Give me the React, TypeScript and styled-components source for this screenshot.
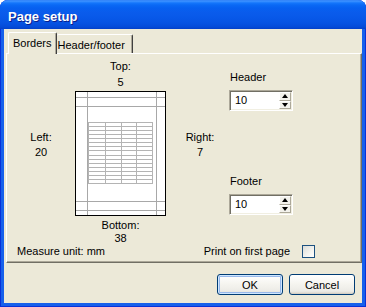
import React from "react";
import styled, { createGlobalStyle } from "styled-components";

const GlobalStyle = createGlobalStyle`
  html, body {
    margin: 0;
    padding: 0;
    background: #ffffff;
  }
  body {
    font-family: "Liberation Sans", Arial, sans-serif;
    font-size: 11px;
    color: #000;
  }
`;

const Window = styled.div`
  width: 366px;
  height: 307px;
  display: flex;
  flex-direction: column;
  border-radius: 8px 8px 0 0;
  overflow: hidden;
  background: #1660eb;
  box-shadow: inset 1px 0 0 #0831d9, inset -1px 0 0 #0831d9, inset 0 -1px 0 #0831d9;
`;

const TitleBar = styled.div`
  flex: none;
  height: 29px;
  box-sizing: border-box;
  display: flex;
  align-items: center;
  padding: 3px 0 0 8px;
  color: #fff;
  font: bold 13px "Liberation Sans", Arial, sans-serif;
  text-shadow: 1px 1px 0 #0a1e8c;
  background: linear-gradient(
    180deg,
    #2a7bf5 0,
    #3f93ff 1px,
    #2a86ff 2px,
    #1476fb 3px,
    #0a69f5 5px,
    #0660f0 8px,
    #0a5cec 12px,
    #0858e8 18px,
    #0653e2 23px,
    #044bd8 27px,
    #0340c8 29px
  );
`;

const Client = styled.div`
  flex: 1;
  margin: 0 4px 4px;
  background: #ece9d8;
  display: flex;
  flex-direction: column;
`;

const TabRow = styled.div`
  height: 24px;
  display: flex;
  align-items: flex-end;
  padding-left: 4px;
`;

const Tab = styled.div<{ $active?: boolean }>`
  position: relative;
  z-index: ${(p) => (p.$active ? 2 : 1)};
  box-sizing: border-box;
  height: ${(p) => (p.$active ? 22 : 19)}px;
  margin-bottom: ${(p) => (p.$active ? -1 : 0)}px;
  padding: 4px ${(p) => (p.$active ? "4px 0 4px" : "7px 0 1px")};
  line-height: 13px;
  white-space: nowrap;
  background: #ece9d8;
  border-top: 1px solid #fff;
  border-left: ${(p) => (p.$active ? "1px solid #fff" : "none")};
  border-right: 1px solid #404040;
  border-radius: 2px 2px 0 0;
  box-shadow: inset -1px 0 0 #aca899;
`;

const Panel = styled.div`
  margin-left: 2px;
  height: 210px;
  box-sizing: border-box;
  border: 1px solid;
  border-color: #fff #716f64 #716f64 #fff;
  box-shadow: inset -1px -1px 0 #aca899;
  display: flex;
  flex-direction: column;
`;

const MainRow = styled.div`
  height: 191px;
  display: flex;
`;

const MarginLayout = styled.div`
  display: grid;
  grid-template-columns: 68px 91px 63px;
  grid-template-rows: 37px 125px 29px;
`;

const MarginLabel = styled.div<{ $pos: "top" | "left" | "right" | "bottom" }>`
  text-align: center;
  white-space: nowrap;
  grid-column: ${(p) => (p.$pos === "left" ? 1 : p.$pos === "right" ? 3 : 2)};
  grid-row: ${(p) => (p.$pos === "top" ? 1 : p.$pos === "bottom" ? 3 : 2)};
  line-height: ${(p) => (p.$pos === "top" ? 16 : p.$pos === "bottom" ? 13 : 15)}px;
  padding-top: ${(p) => (p.$pos === "top" ? 4 : p.$pos === "bottom" ? 3 : 39)}px;
  padding-left: ${(p) => (p.$pos === "right" ? 5 : 0)}px;
`;

const PreviewCell = styled.div`
  grid-column: 2;
  grid-row: 2;
  display: flex;
`;

const SideColumn = styled.div`
  display: flex;
  flex-direction: column;
  align-items: flex-start;
  padding-top: 17px;
`;

const FieldLabel = styled.div<{ $gap?: number }>`
  line-height: 13px;
  padding-left: 1px;
  margin-top: ${(p) => p.$gap ?? 0}px;
  margin-bottom: 6px;
`;

const SpinBox = styled.div`
  width: 64px;
  height: 21px;
  box-sizing: border-box;
  display: flex;
  background: #fff;
  border: 1px solid;
  border-color: #aca899 #fff #fff #aca899;
  box-shadow: inset 1px 1px 0 #716f64, inset -1px -1px 0 #f1efe2;
  padding: 1px 1px 1px 1px;
`;

const SpinValue = styled.div`
  flex: 1;
  padding-left: 4px;
  line-height: 17px;
  color: #000;
`;

const SpinButtons = styled.div`
  width: 12px;
  display: flex;
  flex-direction: column;
`;

const SpinButton = styled.div<{ $down?: boolean }>`
  flex: 1;
  display: flex;
  align-items: center;
  justify-content: center;
  background: #f3f2ec;
  border: 1px solid;
  border-color: #fff #aca899 #aca899 #fff;

  &::after {
    content: "";
    border-left: 3px solid transparent;
    border-right: 3px solid transparent;
    ${(p) => (p.$down ? "border-top: 4px solid #000;" : "border-bottom: 4px solid #000;")}
  }
`;

const FooterRow = styled.div`
  height: 13px;
  display: flex;
  align-items: center;
  justify-content: space-between;
  padding: 0 46px 0 10px;
  line-height: 13px;
`;

const CheckRow = styled.label`
  display: flex;
  align-items: center;
  gap: 12px;
`;

const CheckBox = styled.span`
  width: 13px;
  height: 13px;
  box-sizing: border-box;
  border: 1px solid #1c5180;
  background: linear-gradient(135deg, #dcdcd7 0%, #f4f4f0 60%, #ffffff 100%);
`;

const ButtonRow = styled.div`
  display: flex;
  justify-content: flex-end;
  gap: 6px;
  margin-top: 11px;
  padding-right: 7px;
`;

const Button = styled.button<{ $default?: boolean }>`
  width: 66px;
  height: 21px;
  padding: 0;
  font: 11px "Liberation Sans", Arial, sans-serif;
  color: #000;
  border: 1px solid #003c74;
  border-radius: 3px;
  background: linear-gradient(180deg, #ffffff 0%, #f6f5f0 45%, #ecebe6 85%, #d6d0c5 100%);
  box-shadow: ${(p) =>
    p.$default
      ? "inset 0 0 0 1px #cee7ff, inset 0 0 0 2px #98b8ea"
      : "inset 0 -1px 0 #d6d0c5"};
`;

const PagePreview = () => {
  const rows = 15;
  const top = 31;
  const height = 61;
  const rowLines = Array.from({ length: rows + 1 }, (_, i) => Math.round(top + (i * height) / rows) + 0.5);
  const colLines = [13.5, 30.5, 46.5, 61.5, 77.5];
  return (
    <svg width="91" height="125" viewBox="0 0 91 125" shapeRendering="crispEdges">
      <rect x="0.5" y="0.5" width="90" height="124" fill="#fff" stroke="#000" />
      {[6.5, 15.5, 110.5, 119.5].map((y) => (
        <line key={"h" + y} x1="1" x2="90" y1={y} y2={y} stroke="#a8a8a8" />
      ))}
      {[12.5, 81.5].map((x) => (
        <line key={"v" + x} x1={x} x2={x} y1="1" y2="124" stroke="#a8a8a8" />
      ))}
      {rowLines.map((y) => (
        <line key={"r" + y} x1="13" x2="78" y1={y} y2={y} stroke="#b4b4b4" />
      ))}
      {colLines.map((x) => (
        <line key={"c" + x} x1={x} x2={x} y1={top} y2={top + height + 1} stroke="#b4b4b4" />
      ))}
    </svg>
  );
};

const Spinner = ({ value }: { value: string }) => (
  <SpinBox>
    <SpinValue>{value}</SpinValue>
    <SpinButtons>
      <SpinButton />
      <SpinButton $down />
    </SpinButtons>
  </SpinBox>
);

export default function App() {
  return (
    <>
      <GlobalStyle />
      <Window>
        <TitleBar>Page setup</TitleBar>
        <Client>
          <TabRow>
            <Tab $active>Borders</Tab>
            <Tab>Header/footer</Tab>
          </TabRow>
          <Panel>
            <MainRow>
              <MarginLayout>
                <MarginLabel $pos="top">
                  Top:
                  <br />5
                </MarginLabel>
                <MarginLabel $pos="left">
                  Left:
                  <br />
                  20
                </MarginLabel>
                <PreviewCell>
                  <PagePreview />
                </PreviewCell>
                <MarginLabel $pos="right">
                  Right:
                  <br />7
                </MarginLabel>
                <MarginLabel $pos="bottom">
                  Bottom:
                  <br />
                  38
                </MarginLabel>
              </MarginLayout>
              <SideColumn>
                <FieldLabel>Header</FieldLabel>
                <Spinner value="10" />
                <FieldLabel $gap={64}>Footer</FieldLabel>
                <Spinner value="10" />
              </SideColumn>
            </MainRow>
            <FooterRow>
              <span>Measure unit: mm</span>
              <CheckRow>
                Print on first page
                <CheckBox />
              </CheckRow>
            </FooterRow>
          </Panel>
          <ButtonRow>
            <Button $default>OK</Button>
            <Button>Cancel</Button>
          </ButtonRow>
        </Client>
      </Window>
    </>
  );
}
